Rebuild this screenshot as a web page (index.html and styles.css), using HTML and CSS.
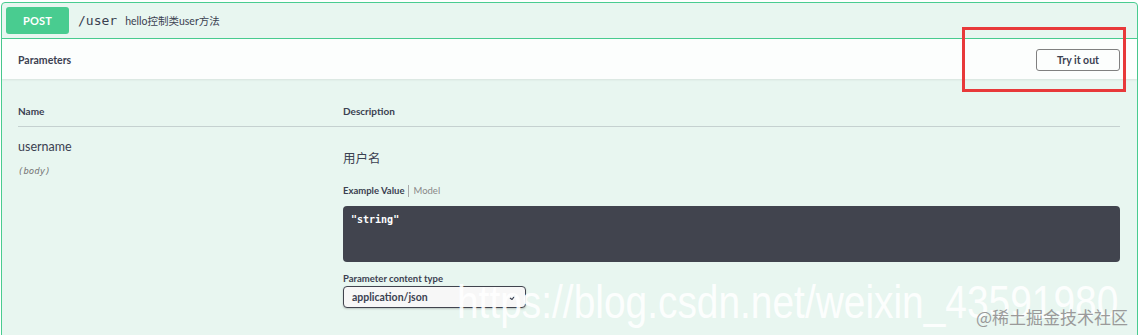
FILE: index.html
```html
<!DOCTYPE html>
<html>
<head>
<meta charset="utf-8">
<link rel="stylesheet" href="styles.css">
</head>
<body>
<div class="opblock">
  <div class="summary">
    <span class="method">POST</span>
    <span class="path">/user</span>
    <span class="summary-desc">hello控制类user方法</span>
  </div>
  <div class="section-header">
    <h4 class="section-title">Parameters</h4>
    <button class="try-btn">Try it out</button>
  </div>
  <div class="params">
    <div class="params-head">
      <div class="col-name">Name</div>
      <div class="col-desc">Description</div>
    </div>
    <div class="param-row">
      <div class="col-name">
        <div class="param-name">username</div>
        <div class="param-in">(body)</div>
      </div>
      <div class="col-desc">
        <div class="param-label">用户名</div>
        <div class="tabs">
          <span class="tab active">Example Value</span>
          <span class="tab">Model</span>
        </div>
        <div class="example">"string"</div>
        <div class="ctype-label">Parameter content type</div>
        <div class="select">
          <span>application/json</span>
          <svg class="arrow" width="8" height="6" viewBox="0 0 8 6"><path d="M1 4 L3 5.5 L6 1.5" fill="none" stroke="#3b4151" stroke-width="1.2"/></svg>
        </div>
      </div>
    </div>
  </div>
  <div class="highlight"></div>
</div>
<div class="watermark">https://blog.csdn.net/weixin_43591980</div>
<div class="watermark-jj">@稀土掘金技术社区</div>
</body>
</html>
```
FILE: styles.css
```css
html, body {
  margin: 0;
  padding: 0;
  background: #ffffff;
  overflow: hidden;
  height: 335px;
}
body {
  font-family: Lato, "Noto Sans CJK SC", sans-serif;
  color: #3b4151;
  position: relative;
}
.opblock {
  position: relative;
  margin: 2px 0 0 1px;
  width: 1135px;
  height: 360px;
  border: 1px solid #49cc90;
  border-radius: 4px;
  background: #e8f6f0;
}
.summary {
  display: flex;
  align-items: center;
  height: 27px;
  padding: 4px 4px 4px 4px;
  border-bottom: 1px solid #49cc90;
}
.method {
  display: flex;
  align-items: center;
  justify-content: center;
  width: 63px;
  height: 27px;
  background: #49cc90;
  border-radius: 3px;
  color: #fff;
  font-size: 11px;
  font-weight: 700;
  letter-spacing: 0.2px;
}
.path {
  margin-left: 9px;
  font-family: "DejaVu Sans Mono", monospace;
  font-size: 13px;
  color: #3b4151;
}
.summary-desc {
  margin-left: 8px;
  font-size: 10.5px;
  color: #3b4151;
}
.section-header {
  display: flex;
  align-items: center;
  justify-content: space-between;
  height: 40px;
  padding: 0 17px 0 16px;
  background: rgba(255,255,255,0.85);
  box-shadow: 0 1px 2px rgba(0,0,0,0.08);
}
.section-title {
  margin: 0;
  font-size: 10.5px;
  font-weight: 700;
  padding-top: 2px;
}
.try-btn {
  width: 84px;
  height: 22px;
  margin-top: 2px;
  border: 1px solid #808080;
  border-radius: 3px;
  background: transparent;
  font-family: Lato, sans-serif;
  font-size: 10.5px;
  font-weight: 700;
  color: #3b4151;
  padding: 0;
}
.params {
  padding: 0 17px 0 16px;
}
.params-head {
  display: flex;
  height: 48px;
  align-items: flex-end;
  padding-bottom: 9px;
  box-sizing: border-box;
  border-bottom: 1px solid rgba(59,65,81,0.2);
  font-size: 10px;
  font-weight: 700;
}
.col-name {
  width: 325px;
  flex: none;
}
.col-desc {
  flex: 1;
}
.param-row {
  display: flex;
  padding-top: 12px;
}
.param-name {
  font-size: 12.5px;
  color: #3b4151;
}
.param-in {
  margin-top: 12px;
  font-family: "DejaVu Sans Mono", monospace;
  font-style: italic;
  font-size: 9px;
  color: #777;
}
.param-label {
  margin-top: 9px;
  font-size: 12.5px;
}
.tabs {
  display: flex;
  margin-top: 18px;
  font-size: 9.5px;
  line-height: 12px;
}
.tab {
  color: #888;
}
.tab.active {
  color: #3b4151;
  font-weight: 700;
  padding-right: 4px;
  margin-right: 4px;
  border-right: 1px solid #aaa;
}
.example {
  margin-top: 9px;
  height: 56px;
  box-sizing: border-box;
  padding: 8px 8px;
  background: #41444e;
  border-radius: 4px;
  color: #fff;
  font-family: "DejaVu Sans Mono", monospace;
  font-weight: 700;
  font-size: 10px;
}
.ctype-label {
  margin-top: 11px;
  font-size: 9.5px;
  font-weight: 700;
  color: #3b4151;
}
.select {
  display: flex;
  align-items: center;
  justify-content: space-between;
  margin-top: 2px;
  width: 183px;
  height: 22px;
  box-sizing: border-box;
  padding: 0 8px;
  border: 1px solid #41444e;
  border-radius: 4px;
  background: #f7f7f7;
  box-shadow: 0 1px 2px rgba(0,0,0,0.2);
  font-size: 10.5px;
  font-weight: 700;
}
.highlight {
  position: absolute;
  left: 960px;
  top: 24px;
  width: 158px;
  height: 59px;
  border: 3px solid #e8393a;
}
.watermark {
  position: absolute;
  left: 457px;
  top: 276px;
  font-family: "Liberation Sans", Arial, sans-serif;
  font-size: 46px;
  line-height: 53px;
  transform: scaleX(0.845);
  transform-origin: left top;
  color: rgba(255,255,255,0.92);
  white-space: nowrap;
}
.watermark-jj {
  position: absolute;
  left: 976px;
  top: 306px;
  font-family: "Noto Sans CJK SC", serif;
  font-size: 17px;
  line-height: 22px;
  color: #9a9a9a;
  white-space: nowrap;
}
```
